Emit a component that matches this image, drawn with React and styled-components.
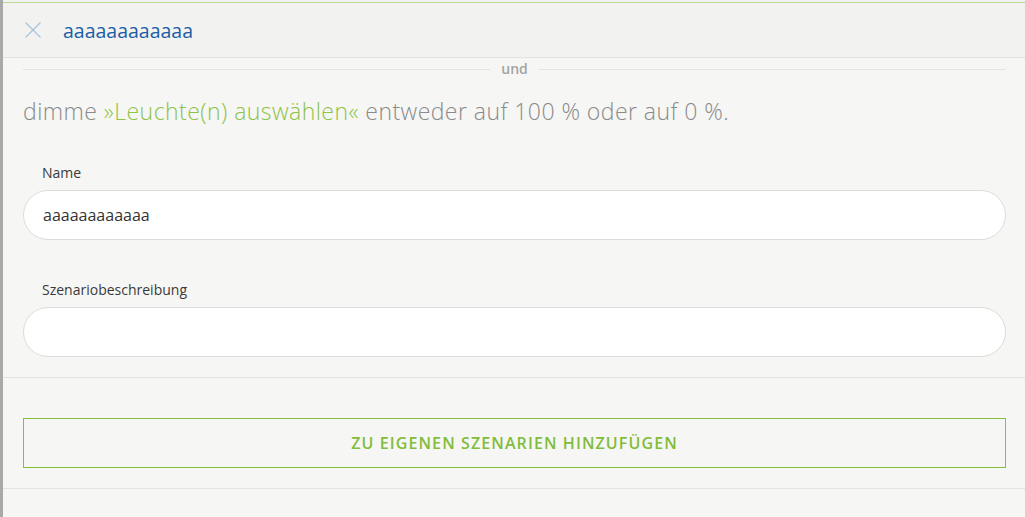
import React from "react";
import styled, { createGlobalStyle } from "styled-components";

const GlobalStyle = createGlobalStyle`
  html, body {
    margin: 0;
    padding: 0;
    background: #f2f2f1;
    font-family: "Open Sans", "Noto Sans", sans-serif;
  }
`;

const Page = styled.div`
  display: flex;
  min-height: 517px;
  padding-top: 2px;
  box-sizing: border-box;
`;

const EdgeBar = styled.div`
  width: 3px;
  background: #a9a9a9;
  flex-shrink: 0;
  margin-top: -2px;
`;

const Panel = styled.div`
  flex: 1;
  display: flex;
  flex-direction: column;
  background: #f6f6f4;
  border-top: 1px solid #b9da92;
`;

const Header = styled.div`
  height: 54px;
  display: flex;
  align-items: center;
  gap: 21px;
  padding-left: 21px;
  background: #f2f2f1;
  border-bottom: 1px solid #e3e3e2;
`;

const CloseButton = styled.button`
  border: none;
  background: none;
  padding: 0;
  width: 18px;
  height: 18px;
  display: flex;
  cursor: pointer;
`;

const Title = styled.h1`
  margin: 0;
  font-size: 19.5px;
  font-weight: 400;
  color: #1c5ea6;
`;

const Body = styled.div`
  padding: 0 19px 20px 20px;
  border-bottom: 1px solid #e3e3e2;
`;

const Divider = styled.div`
  display: flex;
  align-items: center;
  gap: 11px;
  height: 22px;

  &::before,
  &::after {
    content: "";
    flex: 1;
    height: 1px;
    background: #e3e3e2;
  }
`;

const DividerText = styled.span`
  font-size: 14px;
  font-weight: 600;
  color: #a3a3a3;
  line-height: 14px;
`;

const Description = styled.p`
  margin: 16px 0 0;
  font-size: 23px;
  line-height: 30px;
  font-weight: 300;
  letter-spacing: 0.45px;
  color: #8a8a8a;
`;

const Highlight = styled.span`
  color: #8dc347;
`;

const Field = styled.div`
  display: flex;
  flex-direction: column;
  margin-top: ${(p) => p.$gap}px;
`;

const Label = styled.label`
  font-size: 14px;
  line-height: 18px;
  color: #3a3a3a;
  padding-left: 19px;
  margin-bottom: 8px;
`;

const Input = styled.input`
  height: 50px;
  box-sizing: border-box;
  border: 1px solid #dcdcda;
  border-radius: 25px;
  background: #fff;
  padding: 0 19px;
  font-family: "Open Sans", "Noto Sans", sans-serif;
  font-size: 16px;
  color: #333;
  outline: none;
`;

const Actions = styled.div`
  padding: 40px 19px 20px 20px;
  border-bottom: 1px solid #e3e3e2;
`;

const AddButton = styled.button`
  width: 100%;
  height: 50px;
  background: transparent;
  border: 1px solid #86bf3c;
  color: #82bc3a;
  font-family: "Open Sans", "Noto Sans", sans-serif;
  font-size: 16px;
  font-weight: 600;
  letter-spacing: 1.1px;
  text-transform: uppercase;
  cursor: pointer;
`;

const CloseIcon = () => (
  <svg width="18" height="18" viewBox="0 0 18 18">
    <path d="M1.5 1.5 L16.5 16.5 M16.5 1.5 L1.5 16.5" stroke="#a9c5de" strokeWidth="1.3" fill="none" />
  </svg>
);

export default function App() {
  return (
    <>
      <GlobalStyle />
      <Page>
        <EdgeBar />
        <Panel>
          <Header>
            <CloseButton aria-label="Schließen">
              <CloseIcon />
            </CloseButton>
            <Title>aaaaaaaaaaaa</Title>
          </Header>
          <Body>
            <Divider>
              <DividerText>und</DividerText>
            </Divider>
            <Description>
              dimme <Highlight>»Leuchte(n) auswählen«</Highlight> entweder auf 100 % oder auf 0 %.
            </Description>
            <Field $gap={38}>
              <Label>Name</Label>
              <Input defaultValue="aaaaaaaaaaaa" />
            </Field>
            <Field $gap={41}>
              <Label>Szenariobeschreibung</Label>
              <Input defaultValue="" />
            </Field>
          </Body>
          <Actions>
            <AddButton>Zu eigenen Szenarien hinzufügen</AddButton>
          </Actions>
        </Panel>
      </Page>
    </>
  );
}
